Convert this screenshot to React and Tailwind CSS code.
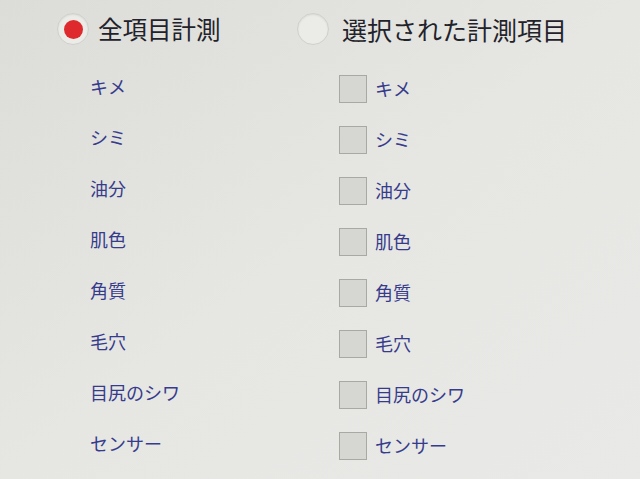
const items = ["キメ", "シミ", "油分", "肌色", "角質", "毛穴", "目尻のシワ", "センサー"];

function Radio({ checked }) {
  return (
    <div className="h-[32px] w-[32px] rounded-full border border-[#cfcfcc] bg-[#ebebe8] shadow-[inset_0_1px_2px_rgba(0,0,0,0.08)] flex items-center justify-center">
      {checked && <div className="h-[19px] w-[19px] rounded-full bg-[#de2a2c]" />}
    </div>
  );
}

export default function App() {
  return (
    <div
      className="h-[479px] w-[640px] overflow-hidden bg-gradient-to-br from-[#dcdcd8] via-[#e6e6e3] to-[#e9e9e7] text-[#22222a]"
      style={{ fontFamily: '"Noto Sans CJK JP", "Noto Sans", sans-serif' }}
    >
      <div className="grid grid-cols-[240px_1fr] pl-[57px] pt-[12px]">
        {/* ALL ITEMS */}
        <div>
          <div className="flex items-center gap-[9px] h-[34px]">
            <Radio checked />
            <span className="text-[24.5px] leading-none">全項目計測</span>
          </div>
          <div className="pl-[33px] pt-[15px]">
            {items.map(t => (
              <div key={t} className="h-[51px] flex items-center text-[18px] text-[#363b8c]">
                {t}
              </div>
            ))}
          </div>
        </div>

        {/* SELECTED ITEMS */}
        <div>
          <div className="flex items-center gap-[13px] h-[34px]">
            <Radio />
            <span className="text-[25px] leading-none">選択された計測項目</span>
          </div>
          <div className="pl-[42px] pt-[17px]">
            {items.map(t => (
              <div key={t} className="h-[51px] flex items-center gap-[8px] text-[18px] text-[#363b8c]">
                <div className="h-[28px] w-[28px] border border-[#a8a8a4] bg-[#d6d6d2]" />
                <span>{t}</span>
              </div>
            ))}
          </div>
        </div>
      </div>
    </div>
  );
}
